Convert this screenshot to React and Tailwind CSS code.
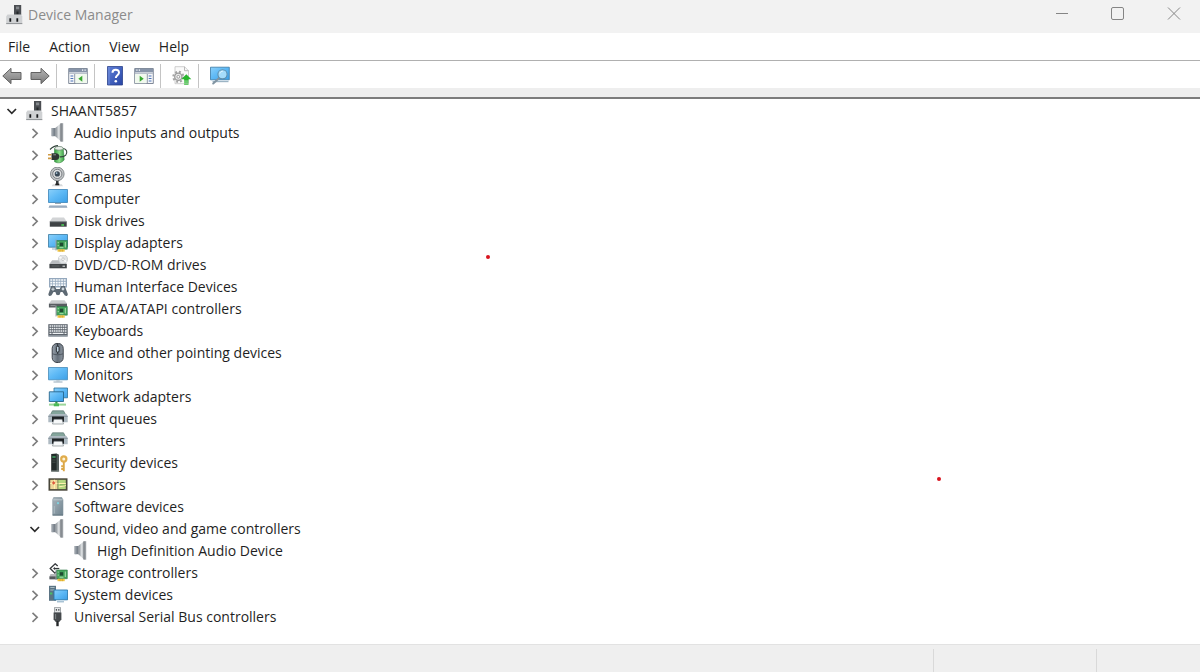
import { useState } from "react";

const Svg = ({ children }) => (
  <svg viewBox="0 0 20 20" className="w-5 h-5 shrink-0" aria-hidden="true">
    {children}
  </svg>
);

const Gradients = () => (
  <svg className="absolute w-0 h-0" aria-hidden="true">
    <defs>
      <linearGradient id="screen" x1="0" y1="0" x2="1" y2="1">
        <stop offset="0" stopColor="#8bd0fa" />
        <stop offset="0.45" stopColor="#5fbaf6" />
        <stop offset="1" stopColor="#3c9fe6" />
      </linearGradient>
      <linearGradient id="metal" x1="0" y1="0" x2="1" y2="0">
        <stop offset="0" stopColor="#7d848b" />
        <stop offset="0.6" stopColor="#dfe2e4" />
        <stop offset="1" stopColor="#a4a9ad" />
      </linearGradient>
      <linearGradient id="shell" x1="0" y1="0" x2="1" y2="0">
        <stop offset="0" stopColor="#9aa3ad" />
        <stop offset="0.5" stopColor="#66707b" />
        <stop offset="1" stopColor="#8c959f" />
      </linearGradient>
      <linearGradient id="arrow" x1="0" y1="0" x2="0" y2="1">
        <stop offset="0" stopColor="#b5b5b5" />
        <stop offset="1" stopColor="#7b7b7b" />
      </linearGradient>
      <linearGradient id="help" x1="0" y1="0" x2="1" y2="1">
        <stop offset="0" stopColor="#5f80d8" />
        <stop offset="1" stopColor="#2744a4" />
      </linearGradient>
      <linearGradient id="tower" x1="0" y1="0" x2="1" y2="1">
        <stop offset="0" stopColor="#a9b5bc" />
        <stop offset="1" stopColor="#6f838f" />
      </linearGradient>
      <linearGradient id="green" x1="0" y1="0" x2="1" y2="0">
        <stop offset="0" stopColor="#2f9a3c" />
        <stop offset="0.5" stopColor="#8fe08c" />
        <stop offset="1" stopColor="#3a9a45" />
      </linearGradient>
    </defs>
  </svg>
);

// Green adapter board, shared by display, IDE and storage
const Board = ({ y = 0 }) => (
  <g transform={`translate(0 ${y})`}>
    <path d="M8.5 7.5h10.8v8.7H8.5z" fill="#43a35c" stroke="#2c7544" strokeWidth="0.6" />
    <path d="M8 6.5v11" stroke="#9aa2a6" strokeWidth="1" />
    <rect x="11.8" y="9.7" width="3.4" height="3.4" fill="#1f4b31" />
    <path d="M17.3 9v5.5M10.2 9v1.2M10.2 12v1.2M11.5 14.7h4" stroke="#b7e6b5" strokeWidth="0.9" />
    <path d="M9.5 16.3h7.2v2.4H9.500z" fill="#efc443" />
    <path d="M12 16.500v2.200M14.300 16.500v2.200" stroke="#b98a22" strokeWidth="0.5" />
  </g>
);

const Drive = () => (
  <>
    <path d="M4.5 6.5h11.5l2.7 4H1.8z" fill="#d2d4d6" />
    <path d="M1.8 10.5h16.9v5.2H1.8z" fill="#3e4245" />
    <path d="M1.8 10.7h16.9" stroke="#888d91" strokeWidth="0.8" />
  </>
);

const Printer = () => (
  <>
    <path d="M4.5 1.8h11l2 3.8H2.5z" fill="#84a59c" stroke="#5f7a76" strokeWidth="0.7" />
    <path d="M1.5 5h17l1.2 2.2v6H.3v-6z" fill="#aebac2" />
    <path d="M.3 6.8h19.4v.9H.3z" fill="#7e8d96" />
    <path d="M4 7.5h12v5.3H4z" fill="#202427" />
    <path d="M6 10.300h8l1.500 4.700h-11z" fill="#f6f8f9" stroke="#71787d" strokeWidth="0.6" />
  </>
);

const Speaker = () => (
  <>
    <path d="M3.5 5h4v8.200h-4z" fill="#78818a" />
    <path d="M4.800 5v8.200" stroke="#a7afb6" strokeWidth="1" />
    <path d="M7.300 5 13 .3v18.200L7.300 13.200z" fill="url(#metal)" />
    <path d="M12.700.2h2.500v18.500h-2.500z" fill="#9a9fa4" />
    <path d="M13 .3v18.200" stroke="#666b70" strokeWidth="0.7" />
  </>
);

const icons = {
  root: (
    <>
      <path d="M9 0h7.2v10H9z" fill="#4b4e52" />
      <path d="M11 1.500h3.200v2.800H11z" fill="#85898d" />
      <path d="M11.500 6.500h2v3h-2z" fill="#25282b" />
      <path d="M2.500 9.500H16l1.300 2v7.300H1.200v-7.300z" fill="#cfd1d3" />
      <path d="M1.200 18.600h16.100" stroke="#85888b" strokeWidth="0.9" />
      <path d="M4.400 13.200h1.800v3.600H4.400zM11.400 13.200h1.800v3.600h-1.800z" fill="#17191b" />
    </>
  ),
  speaker: <Speaker />,
  battery: (
    <>
      <path d="M6.500 3.500c3-2 6.500-1.800 8.700-.3l1 11.500c-1.800 3.300-6.700 4-9.700 2z" fill="url(#green)" stroke="#2b7a36" strokeWidth="0.5" />
      <ellipse cx="11" cy="3.300" rx="4.200" ry="1.900" fill="#e8efe8" stroke="#6b8073" strokeWidth="0.7" />
      <path d="M2 4.500C5 1.500 7.500 .6 10 .6M15.500 3.500c3.300.5 4.300 4 2.200 6.600-1.700 2-3 1.800-5.700 1.800" fill="none" stroke="#33443b" strokeWidth="1.1" />
      <path d="M3.500 8.200h4.300c2.300 0 3.600 1.500 3.600 3.400s-1.300 3.500-3.600 3.500H3.500z" fill="#303634" />
      <path d="M0 9.800h3.500M0 13.400h3.500" stroke="#cf9a43" strokeWidth="1.600" />
      <path d="M5.300 9.800h2.700" stroke="#8a938f" strokeWidth="1" />
    </>
  ),
  camera: (
    <>
      <circle cx="9.300" cy="6.900" r="6.800" fill="#c3c6c8" stroke="#868b8e" strokeWidth="1" />
      <circle cx="9.300" cy="6.900" r="4.600" fill="#dfe1e2" stroke="#6f7478" strokeWidth="0.9" />
      <circle cx="9.300" cy="6.900" r="2.600" fill="#3b4a57" />
      <circle cx="8.600" cy="6.100" r="0.900" fill="#a5c3d5" />
      <path d="M8 14h2.600v3H8z" fill="#34383a" />
      <path d="M4.800 17.200h9l1.200 2H3.600z" fill="#d6d8da" />
      <path d="M7.300 16.600h4v1.700h-4z" fill="#222" />
    </>
  ),
  computer: (
    <>
      <path d="M.5.5h19v13H.5z" fill="url(#screen)" stroke="#3a83b8" strokeWidth="0.8" />
      <path d="M7 14.500h6" stroke="#9aa8b3" strokeWidth="1" />
      <path d="M1.500 16.200h17l1 2.800H.5z" fill="#b3c1cf" />
      <path d="M1 17.700h18" stroke="#8b9fb5" strokeWidth="0.8" />
    </>
  ),
  disk: (
    <>
      <Drive />
      <path d="M13.300 13.300H16v1.400h-2.700z" fill="#4fe05a" />
    </>
  ),
  display: (
    <>
      <path d="M.5 1.500h19v12.700H.5z" fill="url(#screen)" stroke="#39789f" strokeWidth="0.8" />
      <path d="M4 16h4" stroke="#a2b2bd" strokeWidth="1" />
      <Board />
    </>
  ),
  dvd: (
    <>
      <path d="M4.200 5.300h12l2.600 3.800H1.400z" fill="#b9bcbf" />
      <circle cx="15" cy="4.200" r="4.600" fill="#e1e4e6" stroke="#c0c4c7" strokeWidth="0.7" />
      <path d="M15 4.200 11.300 2M15 4.200l3.200 2.700" stroke="#fafafa" strokeWidth="1.500" />
      <circle cx="15" cy="4.200" r="1.300" fill="#fff" stroke="#a7abad" strokeWidth="0.6" />
      <path d="M1.400 9h17.400v4.300H1.400z" fill="#414548" />
      <path d="M3.500 11h8" stroke="#6d7275" strokeWidth="0.7" />
      <path d="M14.500 10.600H17v1.200h-2.500z" fill="#cfd3d5" />
    </>
  ),
  hid: (
    <>
      <path d="M1 1h18v9.500H1z" fill="#94a8bd" />
      <path d="M2.300 3h15.400M2.300 5.600h15.400M2.300 8.200h15.400" stroke="#f7fafc" strokeWidth="1.700" strokeDasharray="2 0.700" />
      <path d="M3.200 9h3.600l1.500 3h3.400l1.500-3h3.600l3 8c.2 2.500-2.700 2.700-3.600.6L14.500 15h-1.900l-.8 2.300c-.4 1.200-3.200 1.200-3.600 0L7.400 15H5.500L4 17.600c-.9 2.100-3.800 1.900-3.600-.6z" fill="#5d6973" />
      <path d="M5 10.500v3.400M3.300 12.200h3.400" stroke="#e0e6ea" strokeWidth="0.9" />
      <circle cx="15" cy="12" r="1.400" fill="#cdd6dd" />
    </>
  ),
  ide: (
    <>
      <path d="M3.500 1.200h13l2.500 3.400H.9z" fill="#c9ccce" />
      <path d="M.9 4.600H19V8.500H.9z" fill="#585d61" />
      <path d="M2.500 6.600h5" stroke="#a1a6aa" strokeWidth="0.8" />
      <Board />
    </>
  ),
  keyboard: (
    <>
      <path d="M.3 3.200h19.400v11.500H.3z" fill="#5b626b" />
      <path d="M1.500 5h17M1.500 7.500h17M1.500 10h17" stroke="#eef1f3" strokeWidth="1.600" strokeDasharray="1.600 0.600" />
      <path d="M1.500 12.400h2M4.500 12.400h11M16.500 12.400h2" stroke="#eef1f3" strokeWidth="1.300" />
      <path d="M.3 14.200h19.400v1.600H.3z" fill="#8e969f" />
    </>
  ),
  mouse: (
    <>
      <rect x="4.200" y="0.500" width="11" height="19" rx="4.800" fill="url(#shell)" stroke="#3b4149" strokeWidth="1" />
      <path d="M4.500 10.800c3 1.300 7.500 1.300 10.400 0" fill="none" stroke="#454c55" strokeWidth="0.8" />
      <path d="M9.700 1v10" stroke="#2e343a" strokeWidth="1" />
      <rect x="8.400" y="3.200" width="2.600" height="6" rx="1.300" fill="#c3d6e4" stroke="#1d2024" strokeWidth="0.9" />
    </>
  ),
  monitor: (
    <>
      <path d="M.5 2.500h19v12.300H.5z" fill="url(#screen)" stroke="#468cba" strokeWidth="0.8" />
      <path d="M8.300 15.200h3.400v1.200H8.300z" fill="#b9c6cf" />
      <path d="M5.500 17h9" stroke="#93a9b9" strokeWidth="1" />
    </>
  ),
  network: (
    <>
      <path d="M6 1h13.500v9.800H6z" fill="url(#screen)" stroke="#2f7199" strokeWidth="0.8" />
      <path d="M1.300 4.800h14.200v9.700H1.300z" fill="url(#screen)" stroke="#27678d" strokeWidth="0.9" />
      <path d="M8.400 14.800v3" stroke="#329a43" strokeWidth="2.200" />
      <path d="M1 17.600h17" stroke="#9bd69a" strokeWidth="2" />
      <path d="M5.800 16.500H11v2.800H5.800z" fill="#4db956" />
    </>
  ),
  printer: <Printer />,
  security: (
    <>
      <path d="M3.200 1 8.500.5l2.300 1.200v16.800H3.200z" fill="#232b2a" />
      <path d="M8.600.8 10.800 2v16.200H8.600z" fill="#55605e" />
      <path d="M4.300 4h3.300" stroke="#47b66c" strokeWidth="1.300" />
      <path d="M4.300 7h3.300M4.300 9.200h3.300" stroke="#4c5854" strokeWidth="0.8" />
      <path d="M3.200 18h8" stroke="#7c8783" strokeWidth="1" />
      <circle cx="15.800" cy="5.900" r="2.600" fill="#fff4d5" stroke="#e0ac4c" strokeWidth="2.200" />
      <path d="M15.800 9v9.200M15.500 13.200h-2.300M15.500 16h-2.300" stroke="#dba645" strokeWidth="1.900" />
    </>
  ),
  sensors: (
    <>
      <path d="M.5 3.300h19v12.400H.5z" fill="#48463a" />
      <path d="M2.200 4.800h7.500v9.300H2.200z" fill="#efd698" />
      <path d="M9.700 4.800h8.100v9.300H9.700z" fill="#b4d67f" />
      <path d="M2.200 8.500h15.600M6.500 4.800v9.300M10.500 12l7.300-1.500" stroke="#fff2b0" strokeWidth="1.100" />
      <path d="M10 4.800v9.300" stroke="#7c8456" strokeWidth="0.7" />
      <path d="M5.600 6 7.500 7.900 5.600 9.700 3.900 7.900z" fill="#dd5a40" />
      <path d="M12 9.800h5" stroke="#79a95a" strokeWidth="0.9" />
    </>
  ),
  software: (
    <>
      <path d="M5.800.3h7.800l1.400 2.500v15.500H4.700V2.800z" fill="url(#tower)" stroke="#8698a1" strokeWidth="0.6" />
      <path d="M5.300 2.800h9" stroke="#c7d2d8" strokeWidth="0.8" />
      <circle cx="10" cy="6.200" r="1.100" fill="#7fd3e0" />
      <path d="M6.300 9v7.500" stroke="#aebcc3" strokeWidth="0.9" />
      <path d="M4.700 18h10.300" stroke="#5f727d" strokeWidth="0.9" />
    </>
  ),
  storage: (
    <>
      <path d="M2.500 11h8l2 2.500v2.800H1.500v-2.800z" fill="#b5b8bb" />
      <path d="M1.500 13.400h8.500v2.900H1.500z" fill="#54595c" />
      <path d="M9.700 3 7.200.8 2.200 5.500l4.700 4.700L9.700 7.600" fill="#fff" stroke="#34383b" strokeWidth="1.300" />
      <path d="M6.300 5.500h5" stroke="#34383b" strokeWidth="1.200" />
      <path d="M5 5.500 7 3.900v3.200z" fill="#34383b" />
      <Board y={-0.500} />
    </>
  ),
  system: (
    <>
      <path d="M1 .8h7v15H1z" fill="#5b7484" />
      <path d="M2.300 2.500h4.300M2.300 5h4.300" stroke="#a5bac1" strokeWidth="1" />
      <path d="M2 7.500h2.300v2H2z" fill="#49bd69" />
      <path d="M6 5h13.600v9.800H6z" fill="url(#screen)" stroke="#2877aa" strokeWidth="0.9" />
      <path d="M9 16.800h7" stroke="#8caec6" strokeWidth="1.100" />
    </>
  ),
  usb: (
    <>
      <path d="M6.500.4h6v5.500h-6z" fill="#e3e5e6" stroke="#8d9295" strokeWidth="0.8" />
      <path d="M7.800 2H9v1.800H7.800zM10.200 2h1.200v1.800h-1.200z" fill="#53585b" />
      <path d="M5.600 5.500h7.800v6.700l-1.800 2.500H7.400l-1.800-2.500z" fill="#45494c" />
      <path d="M7.600 7v5" stroke="#808689" strokeWidth="1" />
      <path d="M9.500 14v5.200" stroke="#25282a" strokeWidth="2.400" />
    </>
  ),
};

// Console window with a tree pane, mirrored for the action pane button
const PaneWindow = () => (
  <>
    <path d="M.7 2.500h18.600v15H.7z" fill="#f6f7f9" stroke="#818a99" strokeWidth="1" />
    <path d="M1 2.800h18v3.400H1z" fill="#8794a9" />
    <path d="M1 7.200h18" stroke="#b5bcc8" strokeWidth="1.400" />
    <path d="M14 4.200h1.200M16.500 4.200h1.200" stroke="#fff" strokeWidth="1.200" />
    <path d="M6.800 8v9.500" stroke="#818a99" strokeWidth="1" />
    <path d="M2.500 10h2.800M2.500 12.500h2.800M2.500 15h2.800" stroke="#4b72b8" strokeWidth="1.200" />
    <path d="M7.500 8.200H19v9H7.500z" fill="#f1f9ee" />
    <path d="M14.300 9.800v6l-4-3z" fill="#39a832" />
  </>
);

const BackArrow = () => (
  <path d="M.8 10 9 2.300v4.200h10v7H9v4.200z" fill="url(#arrow)" stroke="#626262" strokeWidth="1" strokeLinejoin="round" />
);

const toolbar = [
  [
    { label: "Back", icon: <BackArrow /> },
    {
      label: "Forward",
      icon: (
        <g transform="matrix(-1 0 0 1 20 0)">
          <BackArrow />
        </g>
      ),
    },
  ],
  [{ label: "Show/Hide Console Tree", icon: <PaneWindow /> }],
  [
    {
      label: "Help topics",
      icon: (
        <>
          <path d="M1.500.5h15v18.500h-15z" fill="url(#help)" stroke="#2c438c" strokeWidth="0.8" />
          <path d="M3 1v17.500" stroke="#7590dc" strokeWidth="1" />
          <path d="M6.500 6.700c0-4 6.500-4 6.500-.2 0 2.800-3.200 2.700-3.200 5.600" fill="none" stroke="#fff" strokeWidth="2" />
          <circle cx="9.800" cy="15.200" r="1.300" fill="#fff" />
        </>
      ),
    },
    {
      label: "Show/Hide Action Pane",
      icon: (
        <g transform="matrix(-1 0 0 1 20 0)">
          <PaneWindow />
        </g>
      ),
    },
  ],
  [
    {
      label: "Update driver",
      icon: (
        <>
          <path d="M3 .7h9.500l4 4v13H3z" fill="#fafafa" stroke="#c3c3c3" strokeWidth="0.8" />
          <path d="M12.500.7v4h4" fill="none" stroke="#aaa" strokeWidth="0.8" />
          <circle cx="6.300" cy="10.800" r="5" fill="none" stroke="#a5a5a5" strokeWidth="2" strokeDasharray="2 1.930" />
          <circle cx="6.300" cy="10.800" r="3.600" fill="#e8e8e8" stroke="#999" strokeWidth="1.200" />
          <circle cx="6.300" cy="10.800" r="1.400" fill="#fff" stroke="#8a8a8a" strokeWidth="0.8" />
          <path d="m14.300 8.200 5 5h-2.800v1.600h-4.400v-1.600H9.300z" fill="#27b52c" />
          <path d="M12.100 16h4.400M12.100 18.200h4.400" stroke="#37bd3c" strokeWidth="1.300" />
        </>
      ),
    },
  ],
  [
    {
      label: "Scan for hardware changes",
      icon: (
        <>
          <path d="M.5 1.200h18.800v12.600H.5z" fill="url(#screen)" stroke="#3979a5" strokeWidth="0.8" />
          <path d="M2.500 15.600h16" stroke="#9cb4c4" strokeWidth="1.200" />
          <path d="m9.700 11.500-6.500 6" stroke="#8194a2" strokeWidth="2" strokeLinecap="round" />
          <circle cx="12.500" cy="8.300" r="4.600" fill="#a5dcfa" stroke="#5e8eac" strokeWidth="1.100" />
          <path d="M9.800 7.500c.5-1.500 1.700-2.300 3-2.300" fill="none" stroke="#e9f8ff" strokeWidth="1" />
        </>
      ),
    },
  ],
];

const devices = [
  { name: "Audio inputs and outputs", icon: "speaker" },
  { name: "Batteries", icon: "battery" },
  { name: "Cameras", icon: "camera" },
  { name: "Computer", icon: "computer" },
  { name: "Disk drives", icon: "disk" },
  { name: "Display adapters", icon: "display" },
  { name: "DVD/CD-ROM drives", icon: "dvd" },
  { name: "Human Interface Devices", icon: "hid" },
  { name: "IDE ATA/ATAPI controllers", icon: "ide" },
  { name: "Keyboards", icon: "keyboard" },
  { name: "Mice and other pointing devices", icon: "mouse" },
  { name: "Monitors", icon: "monitor" },
  { name: "Network adapters", icon: "network" },
  { name: "Print queues", icon: "printer" },
  { name: "Printers", icon: "printer" },
  { name: "Security devices", icon: "security" },
  { name: "Sensors", icon: "sensors" },
  { name: "Software devices", icon: "software" },
  {
    name: "Sound, video and game controllers",
    icon: "speaker",
    open: true,
    children: [{ name: "High Definition Audio Device", icon: "speaker", leaf: true }],
  },
  { name: "Storage controllers", icon: "storage" },
  { name: "System devices", icon: "system" },
  { name: "Universal Serial Bus controllers", icon: "usb" },
];

const TreeItem = ({ node }) => {
  const [open, setOpen] = useState(Boolean(node.open));

  return (
    <li>
      <div className="flex items-center h-[22px]">
        {node.leaf ? (
          <span className="w-4 mr-[5px]" />
        ) : (
          <button
            type="button"
            aria-label={node.name}
            aria-expanded={open}
            onClick={() => setOpen(!open)}
            className="w-4 h-4 mr-[5px] shrink-0"
          >
            <svg viewBox="0 0 16 16" className="w-4 h-4" fill="none">
              {open ? (
                <path d="m3.500 6 4.300 4.300L12 6" stroke="#2b2b2b" strokeWidth="1.700" />
              ) : (
                <path d="m5.500 3.800 4.700 4.500-4.700 4.500" stroke="#7d7d7d" strokeWidth="1.600" />
              )}
            </svg>
          </button>
        )}
        <Svg>{icons[node.icon]}</Svg>
        <span className="ml-[6px] whitespace-nowrap">{node.name}</span>
      </div>
      {open && node.children && (
        <ul className="pl-[23px]">
          {node.children.map((child) => (
            <TreeItem key={child.name} node={child} />
          ))}
        </ul>
      )}
    </li>
  );
};

const windowButtons = [
  { label: "Minimize", path: "M1 6.500h12" },
  { label: "Maximize", path: "M2 .5h9a1.500 1.500 0 0 1 1.500 1.500v9a1.500 1.500 0 0 1-1.500 1.500H2A1.500 1.500 0 0 1 .5 11V2A1.500 1.500 0 0 1 2 .5z" },
  { label: "Close", path: "m1 .5 12 12M13 .5l-12 12" },
];

const App = () => {
  return (
    <div className="relative flex flex-col min-h-screen bg-white font-['Open_Sans','Noto_Sans',sans-serif] text-sm text-[#1f1f1f]">
      <Gradients />

      <header className="flex justify-between h-[33px] bg-[#f2f2f2]">
        <div className="flex items-center gap-[3px] pl-[5px] pb-[3px]">
          <Svg>{icons.root}</Svg>
          <h1 className="text-[#8b8b8b]">Device Manager</h1>
        </div>
        <div className="flex gap-1 h-7">
          {windowButtons.map((button) => (
            <button key={button.label} type="button" aria-label={button.label} className="flex items-center justify-center w-[52px]">
              <svg viewBox="0 0 14 14" className="w-3.5 h-3.5" fill="none" stroke="#858585">
                <path d={button.path} />
              </svg>
            </button>
          ))}
        </div>
      </header>

      <nav className="flex items-center gap-[19px] h-7 px-2 border-b border-[#b0b0b0]">
        {["File", "Action", "View", "Help"].map((item) => (
          <button key={item} type="button">
            {item}
          </button>
        ))}
      </nav>

      <div role="toolbar" aria-label="Tools" className="flex h-[27px] pt-[3px] pl-0.5">
        {toolbar.map((group, index) => (
          <div key={index} className="flex">
            {index > 0 && <span className="w-px ml-[6px] mr-[11px] bg-[#c4c4c4]" />}
            <div className="flex items-center gap-2">
              {group.map((tool) => (
                <button key={tool.label} type="button" aria-label={tool.label}>
                  <Svg>{tool.icon}</Svg>
                </button>
              ))}
            </div>
          </div>
        ))}
      </div>
      <div className="h-[11px] bg-[#eeeeee] border-b-2 border-[#7c7c7c]" />

      <main className="flex-1 pt-px pl-1">
        <ul>
          <TreeItem node={{ name: "SHAANT5857", icon: "root", open: true, children: devices }} />
        </ul>
      </main>

      <footer className="flex h-7 bg-[#efefef] border-t border-[#e2e2e2] pt-1">
        <div className="flex-1" />
        <div className="w-[163px] border-l border-[#d9d9d9]" />
        <div className="w-[104px] border-l border-[#d9d9d9]" />
      </footer>

      {/* pointer marks over the empty pane */}
      <span className="absolute left-[486px] top-[255px] w-1 h-1 rounded-full bg-[#d9141e]" />
      <span className="absolute left-[937px] top-[477px] w-1 h-1 rounded-full bg-[#d9141e]" />
    </div>
  );
};

export default App;
